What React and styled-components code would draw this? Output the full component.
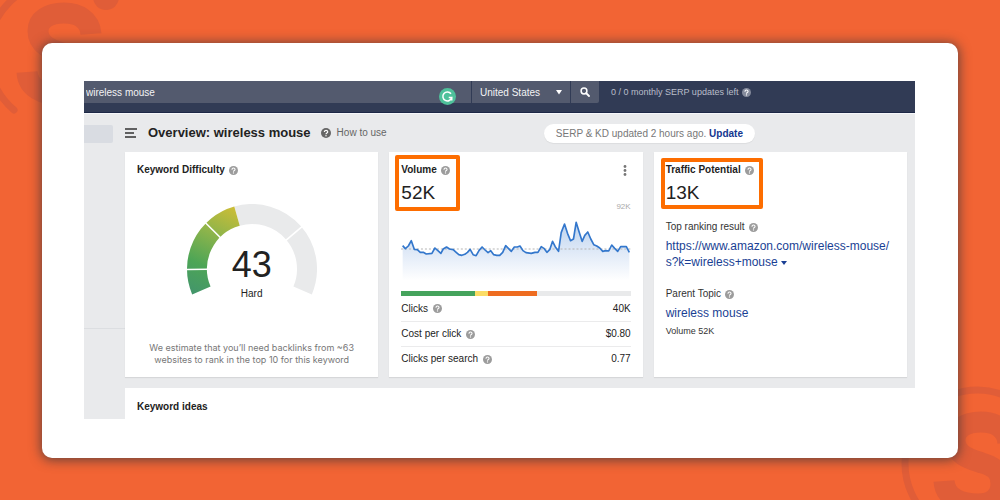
import React from "react";
import styled, { createGlobalStyle } from "styled-components";

const GlobalStyle = createGlobalStyle`
  *, *::before, *::after {
    box-sizing: border-box;
  }

  body {
    margin: 0;
    background: #f26434;
    color: #222;
    font-family: "Liberation Sans", Arial, sans-serif;
    font-size: 10px;
    line-height: 12px;
  }

  button, input, select {
    font: inherit;
  }
`;

const Page = styled.div`
  position: relative;
  min-height: 100vh;
  padding: 43px 42px 42px;
  overflow: hidden;
`;

const Watermark = styled.svg`
  position: absolute;
  width: 160px;
  height: 160px;
  color: #e05d38;
  ${({ $corner }) =>
    $corner === "top" ? "left: -19px; top: -26px;" : "right: -58px; bottom: -43px;"}
`;

const Sheet = styled.div`
  position: relative;
  padding: 38px 43px 39px 42px;
  border-radius: 10px;
  background: #fff;
  box-shadow: 0 1px 12px 1px rgba(40, 50, 60, 0.7);
`;

const Screen = styled.div`
  background: #e9eaec;
`;

const TopBar = styled.header`
  display: flex;
  align-items: flex-start;
  gap: 1px;
  height: 33px;
  background: #313b55;
  border-bottom: 1px solid #f6f7fa;
  box-shadow: inset 0 -1px 0 #1d2846;
`;

const SearchField = styled.div`
  position: relative;
  flex: 0 1 387px;
`;

const SearchInput = styled.input`
  display: block;
  width: 100%;
  height: 22px;
  padding: 0 40px 0 2px;
  border: 0;
  background: #535a6e;
  color: #f2f3f5;
`;

const GrammarBadge = styled.svg`
  position: absolute;
  right: 15px;
  top: 7px;
  width: 17px;
  height: 17px;
`;

const CountryField = styled.div`
  position: relative;
  flex: 0 0 98px;
`;

const CountrySelect = styled.select`
  display: block;
  appearance: none;
  width: 100%;
  height: 22px;
  padding: 2px 8px 0;
  border: 0;
  border-radius: 0;
  background: #535a6e;
  color: #f2f3f5;
`;

const SelectCaret = styled.svg`
  position: absolute;
  right: 8px;
  top: 9px;
  width: 6px;
  height: 5px;
  pointer-events: none;
`;

const SearchButton = styled.button`
  display: grid;
  place-items: center;
  width: 28px;
  height: 22px;
  padding: 0;
  border: 0;
  border-radius: 0 0 2px 0;
  background: #535a6e;
`;

const UpdatesLeft = styled.div`
  display: flex;
  align-items: center;
  gap: 4px;
  height: 22px;
  margin-left: 11px;
  color: #b9bdc9;
  font-size: 9px;
`;

const Body = styled.div`
  display: flex;
`;

const Sidebar = styled.aside`
  flex: 0 0 41px;
  padding-top: 11px;
`;

const SidebarItem = styled.div`
  width: 29px;
  height: 18px;
  border-radius: 0 2px 2px 0;
  background: #d9dce2;
`;

const SidebarRule = styled.hr`
  height: 1px;
  margin: 185px 0 0;
  border: 0;
  background: #dcdee1;
`;

const Main = styled.main`
  flex: 1;
  min-width: 0;
`;

const TitleRow = styled.div`
  display: flex;
  align-items: center;
  height: 38px;
  padding-right: 160px;
`;

const MenuButton = styled.button`
  display: block;
  width: 12px;
  height: 10px;
  margin-right: 11px;
  padding: 0;
  border: 0;
  background: none;

  svg {
    display: block;
  }
`;

const Title = styled.h1`
  margin: 0 10px 0 0;
  font-size: 13px;
  line-height: 16px;
`;

const HowTo = styled.a`
  display: flex;
  align-items: center;
  gap: 6px;
  color: #666;
  text-decoration: none;
`;

const UpdatePill = styled.div`
  margin-left: auto;
  padding: 4px 12px;
  border-radius: 10px;
  background: #fff;
  color: #777;
  line-height: 11px;
  box-shadow: 0 1px 1px rgba(0, 0, 0, 0.06);
`;

const UpdateLink = styled.a`
  color: #14368f;
  font-weight: 700;
  text-decoration: none;
`;

const Cards = styled.div`
  display: grid;
  grid-template-columns: repeat(3, minmax(0, 1fr));
  gap: 11px;
  padding-right: 8px;
`;

const Card = styled.section`
  position: relative;
  display: flex;
  flex-direction: column;
  min-height: 225px;
  padding: 12px 12px 6px;
  background: #fff;
  box-shadow: 0 1px 1px rgba(0, 0, 0, 0.08);
`;

const CardTitle = styled.h2`
  display: flex;
  align-items: center;
  gap: 4px;
  margin: 0;
  font-size: 10px;
  line-height: 12px;
`;

const HelpIcon = styled.svg`
  flex: none;
  width: ${({ $size }) => $size || 9}px;
  height: ${({ $size }) => $size || 9}px;
  color: ${({ $tone }) => $tone || "#9c9c9c"};
`;

const GaugeBox = styled.div`
  display: grid;
  justify-items: center;
  margin-top: 28px;

  > * {
    grid-area: 1 / 1;
  }
`;

const GaugeText = styled.div`
  padding-top: 42px;
  text-align: center;
`;

const Score = styled.div`
  font-size: 36px;
  line-height: 38px;
`;

const Rating = styled.div`
  padding-top: 4px;
`;

const Note = styled.p`
  margin: auto 0 5px;
  color: #777;
  font-family: Inter, "Liberation Sans", sans-serif;
  font-size: 9px;
  text-align: center;
`;

const Metric = styled.div`
  position: relative;
  align-self: flex-start;

  &::after {
    content: "";
    position: absolute;
    inset: ${({ $frame }) => $frame};
    border: 4px solid #fd6d00;
    border-radius: 2px;
  }
`;

const MetricValue = styled.div`
  margin-top: 7px;
  font-size: 19px;
  line-height: 20px;
`;

const MoreButton = styled.button`
  position: absolute;
  top: 13px;
  right: 16px;
  display: block;
  width: 4px;
  height: 11px;
  padding: 0;
  border: 0;
  background: none;

  svg {
    display: block;
  }
`;

const ChartPeak = styled.div`
  color: #aaa;
  font-size: 8px;
  line-height: 8px;
  text-align: right;
`;

const Chart = styled.svg`
  display: block;
  width: 100%;
  height: 70px;
  margin-top: 2px;
`;

const ClickSplit = styled.div`
  display: flex;
  height: 5px;
  margin-top: 8px;
  background: #e9eaeb;
`;

const SplitPart = styled.span`
  flex: 0 0 ${({ $share }) => $share}%;
  background: ${({ $color }) => $color};
`;

const Stats = styled.dl`
  margin: 0;
`;

const StatRow = styled.div`
  display: flex;
  align-items: center;
  justify-content: space-between;
  height: 25px;

  & + & {
    border-top: 1px solid #ebebec;
  }
`;

const StatName = styled.dt`
  display: flex;
  align-items: center;
  gap: 5px;
`;

const StatValue = styled.dd`
  margin: 0;
`;

const FieldLabel = styled.div`
  display: flex;
  align-items: center;
  gap: 4px;
  margin-top: 18px;
  color: #333;
`;

const BlueLink = styled.a`
  margin-top: 5px;
  color: #1a3f94;
  font-size: 12px;
  line-height: 16px;
  text-decoration: none;
`;

const SmallText = styled.div`
  margin-top: 4px;
  color: #333;
  font-size: 9px;
`;

const Ideas = styled.section`
  margin-top: 11px;
  padding: 13px 12px 6px;
  background: #fff;
`;

const STATS = [
  { name: "Clicks", value: "40K" },
  { name: "Cost per click", value: "$0.80" },
  { name: "Clicks per search", value: "0.77" },
];

const SPLIT = [
  { color: "#45a35c", share: 32 },
  { color: "#fbdc65", share: 6 },
  { color: "#ee6c20", share: 21 },
];

const TREND =
  "54,167 62,176 71,168 80,152 89,178 98,179 107,187 116,187 125,192 142,190 151,174 160,182 169,190 176,177 186,171 195,177 206,179 215,187 223,194 232,196 241,193 249,187 257,178 266,194 275,197 284,181 293,171 302,180 311,188 319,182 328,194 337,196 346,196 355,187 364,167 372,175 381,184 390,171 399,171 407,168 416,182 425,188 441,190 452,187 461,187 471,170 479,175 488,187 497,178 505,154 513,170 523,184 531,128 541,102 550,130 559,152 568,147 576,97 585,126 594,154 602,136 611,126 620,147 629,164 638,168 647,174 656,184 665,182 674,183 683,165 692,175 701,184 710,170 727,170 736,187";

const SWEEP = 226;

// Point on the gauge circle for a value from 0 to 100
function gaugePoint(value, radius) {
  const angle = ((-203 + 360 + (value / 100) * SWEEP) * Math.PI) / 180;
  return [65 + radius * Math.cos(angle), 65 + radius * Math.sin(angle)];
}

function gaugeArc(from, to) {
  const [x1, y1] = gaugePoint(from, 55);
  const [x2, y2] = gaugePoint(to, 55);
  const large = ((to - from) / 100) * SWEEP > 180 ? 1 : 0;
  return `M${x1} ${y1}A55 55 0 ${large} 1 ${x2} ${y2}`;
}

function Help({ size, tone }) {
  return (
    <HelpIcon $size={size} $tone={tone} viewBox="0 0 18 18" aria-hidden="true">
      <circle cx="9" cy="9" r="9" fill="currentColor" />
      <path
        d="M5.9 7.4C5.9 3.2 12.1 3.2 12.1 7C12.1 9.2 9 9 9 11.4"
        fill="none"
        stroke="#fff"
        strokeWidth="2.1"
      />
      <circle cx="9" cy="13.9" r="1.3" fill="#fff" />
    </HelpIcon>
  );
}

function LogoMark({ corner }) {
  return (
    <Watermark $corner={corner} viewBox="-80 -80 160 160" aria-hidden="true">
      <g fill="none" stroke="currentColor">
        <path
          d="M-47 56A73 73 0 0 1 -73 0A73 73 0 0 1 0 -73A73 73 0 0 1 30 -66"
          strokeWidth="7"
          strokeLinecap="round"
        />
        <path
          d="M30 -20C29 -34 17 -41 3 -41C-13 -41 -23 -34 -23 -23C-23 -8 -8 -4 4 0C18 4 23 10 23 21C23 34 14 41 0 41C-18 41 -33 34 -34 18"
          strokeWidth="21"
        />
      </g>
      <circle cx="45" cy="-57" r="13" fill="currentColor" />
    </Watermark>
  );
}

function Gauge() {
  return (
    <svg width="130" height="92" viewBox="0 0 130 92" aria-hidden="true">
      <defs>
        <linearGradient
          id="gauge-fill"
          gradientUnits="userSpaceOnUse"
          x1="10"
          y1="90"
          x2="50"
          y2="4"
        >
          <stop offset="0" stopColor="#43966a" />
          <stop offset="0.3" stopColor="#4da556" />
          <stop offset="0.65" stopColor="#8db44b" />
          <stop offset="1" stopColor="#cdbd36" />
        </linearGradient>
      </defs>
      <g fill="none" strokeWidth="20">
        <path d={gaugeArc(43, 100)} stroke="#e9eaeb" />
        <path d={gaugeArc(0, 43)} stroke="url(#gauge-fill)" />
      </g>
      {[10, 30, 72].map((value) => {
        const [x1, y1] = gaugePoint(value, 44);
        const [x2, y2] = gaugePoint(value, 66);
        return (
          <line
            key={value}
            x1={x1}
            y1={y1}
            x2={x2}
            y2={y2}
            stroke="#fff"
            strokeWidth="1.6"
          />
        );
      })}
    </svg>
  );
}

function TrendChart() {
  return (
    <Chart viewBox="49 69 690 210" preserveAspectRatio="none" aria-hidden="true">
      <defs>
        <linearGradient id="trend-fill" x1="0" y1="0" x2="0" y2="1">
          <stop offset="0" stopColor="#bcd3ee" />
          <stop offset="0.5" stopColor="#dfe9f7" />
          <stop offset="1" stopColor="#fff" />
        </linearGradient>
      </defs>
      <polygon points={`54,272 ${TREND} 736,272`} fill="url(#trend-fill)" />
      <line
        x1="49"
        y1="177"
        x2="739"
        y2="177"
        stroke="#b5b5b5"
        strokeWidth="3"
        strokeDasharray="6 6"
      />
      <polyline
        points={TREND}
        fill="none"
        stroke="#3377cc"
        strokeWidth="5"
        strokeLinejoin="round"
      />
    </Chart>
  );
}

export default function App() {
  return (
    <>
      <GlobalStyle />
      <Page>
        <LogoMark corner="top" />
        <LogoMark corner="bottom" />
        <Sheet>
          <Screen>
            <TopBar>
              <SearchField>
                <SearchInput
                  type="text"
                  aria-label="Keyword"
                  defaultValue="wireless mouse"
                />
                <GrammarBadge viewBox="0 0 34 34" aria-hidden="true">
                  <circle cx="17" cy="17" r="17" fill="#4fc19b" />
                  <path
                    d="M24 11.5A9 9 0 1 0 25.5 19H19.5M25.5 19V25"
                    fill="none"
                    stroke="#fff"
                    strokeWidth="3"
                  />
                </GrammarBadge>
              </SearchField>
              <CountryField>
                <CountrySelect aria-label="Country" defaultValue="us">
                  <option value="us">United States</option>
                </CountrySelect>
                <SelectCaret viewBox="0 0 6 5" aria-hidden="true">
                  <path d="M0 0H6L3 4.5Z" fill="#fff" />
                </SelectCaret>
              </CountryField>
              <SearchButton type="button" aria-label="Search">
                <svg width="10" height="10" viewBox="0 0 20 20" fill="none" stroke="#fff">
                  <circle cx="8" cy="8" r="5.8" strokeWidth="3" />
                  <path d="M12.5 12.5L18 18" strokeWidth="3.6" strokeLinecap="round" />
                </svg>
              </SearchButton>
              <UpdatesLeft>
                0 / 0 monthly SERP updates left
                <Help tone="#858b9c" />
              </UpdatesLeft>
            </TopBar>
            <Body>
              <Sidebar>
                <SidebarItem />
                <SidebarRule />
              </Sidebar>
              <Main>
                <TitleRow>
                  <MenuButton type="button" aria-label="Menu">
                    <svg width="12" height="10" viewBox="0 0 12 10" stroke="#333">
                      <path d="M0 1H12M0 5H9M0 9H11" strokeWidth="1.6" />
                    </svg>
                  </MenuButton>
                  <Title>Overview: wireless mouse</Title>
                  <HowTo href="#how-to-use">
                    <Help size={10} tone="#666" />
                    How to use
                  </HowTo>
                  <UpdatePill>
                    SERP &amp; KD updated 2 hours ago.{" "}
                    <UpdateLink href="#update">Update</UpdateLink>
                  </UpdatePill>
                </TitleRow>
                <Cards>
                  <Card>
                    <CardTitle>
                      Keyword Difficulty <Help />
                    </CardTitle>
                    <GaugeBox>
                      <Gauge />
                      <GaugeText>
                        <Score>43</Score>
                        <Rating>Hard</Rating>
                      </GaugeText>
                    </GaugeBox>
                    <Note>
                      We estimate that you’ll need backlinks from ~63
                      <br />
                      websites to rank in the top 10 for this keyword
                    </Note>
                  </Card>
                  <Card>
                    <Metric $frame="-9px -10px -8px -6px">
                      <CardTitle>
                        Volume <Help />
                      </CardTitle>
                      <MetricValue>52K</MetricValue>
                    </Metric>
                    <MoreButton type="button" aria-label="More options">
                      <svg width="4" height="11" viewBox="0 0 4 11" fill="#777">
                        <circle cx="2" cy="1.5" r="1.4" />
                        <circle cx="2" cy="5.5" r="1.4" />
                        <circle cx="2" cy="9.5" r="1.4" />
                      </svg>
                    </MoreButton>
                    <ChartPeak>92K</ChartPeak>
                    <TrendChart />
                    <ClickSplit>
                      {SPLIT.map(({ color, share }) => (
                        <SplitPart key={color} $color={color} $share={share} />
                      ))}
                    </ClickSplit>
                    <Stats>
                      {STATS.map(({ name, value }) => (
                        <StatRow key={name}>
                          <StatName>
                            {name} <Help />
                          </StatName>
                          <StatValue>{value}</StatValue>
                        </StatRow>
                      ))}
                    </Stats>
                  </Card>
                  <Card>
                    <Metric $frame="-6px -9px -6px -5px">
                      <CardTitle>
                        Traffic Potential <Help />
                      </CardTitle>
                      <MetricValue>13K</MetricValue>
                    </Metric>
                    <FieldLabel>
                      Top ranking result <Help />
                    </FieldLabel>
                    <BlueLink href="#result">
                      https://www.amazon.com/wireless-mouse/
                      <br />
                      s?k=wireless+mouse{" "}
                      <svg width="6" height="6" viewBox="0 0 6 6" aria-hidden="true">
                        <path d="M0 1H6L3 5Z" fill="currentColor" />
                      </svg>
                    </BlueLink>
                    <FieldLabel>
                      Parent Topic <Help />
                    </FieldLabel>
                    <BlueLink href="#topic">wireless mouse</BlueLink>
                    <SmallText>Volume 52K</SmallText>
                  </Card>
                </Cards>
                <Ideas>
                  <CardTitle>Keyword ideas</CardTitle>
                </Ideas>
              </Main>
            </Body>
          </Screen>
        </Sheet>
      </Page>
    </>
  );
}
